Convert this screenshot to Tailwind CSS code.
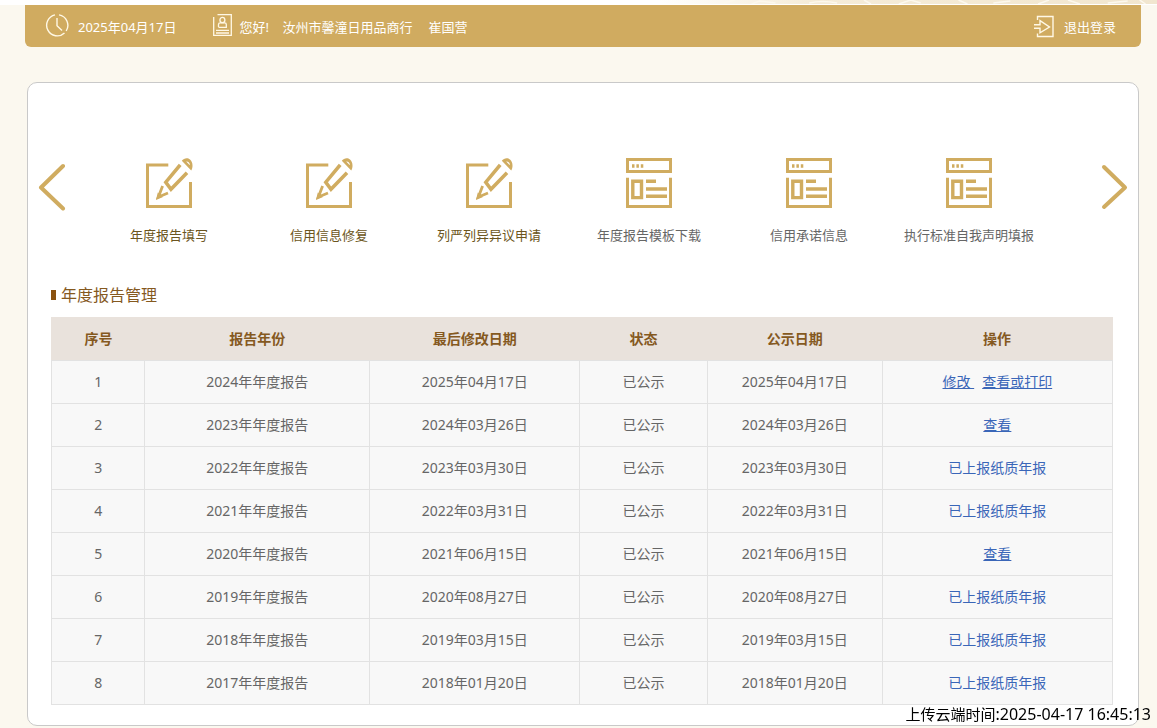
<!DOCTYPE html>
<html lang="zh-CN">
<head>
<meta charset="utf-8">
<meta name="viewport" content="width=device-width, initial-scale=1">
<title>年度报告管理</title>
<script src="https://cdn.jsdelivr.net/npm/@tailwindcss/browser@4"></script>
</head>
<body class="min-h-screen bg-[#fbf8ef] font-['Noto_Sans','Noto_Sans_CJK_SC',sans-serif] text-sm text-[#666666]">
<svg class="hidden" aria-hidden="true">
  <symbol id="edit" viewBox="0 0 48 52">
    <g fill="none" stroke="#d0ac60" stroke-width="3">
      <path d="M23.3 8H2.5V49.5H45.5V25"/>
      <path d="M35.2 7.8 20.8 25.2 26 32.2 42 15.8" stroke-width="3.6"/>
      <path d="M17.6 29 13.4 40 23 36" stroke-width="2.8"/>
    </g>
    <path fill="#d0ac60" d="M11 43 12.8 35.5 18 40ZM36.8 3.8C38.8 1.2 42.6.4 45 2.6 48 5.3 48.2 10.2 46.2 13.4ZM41.2 4.4 44.8 8.2C45 5.8 43.4 4.2 41.2 4.4Z" fill-rule="evenodd"/>
  </symbol>
  <symbol id="page" viewBox="0 0 48 52">
    <g fill="none" stroke="#d0ac60" stroke-width="3">
      <path d="M2.5 2.5H45.5V14.5H2.5ZM2.5 20.7V49.5H45.5V20.7"/>
      <path d="M7.8 24.2H16.5V40.6H7.8Z" stroke-width="3.4"/>
      <path d="M21 24.2H31M21 32H42M21 39.2H42" stroke-width="3.4"/>
      <path d="M7 9H9.5M11.4 9H13.9M15.8 9H18.3" stroke-width="3.4"/>
    </g>
  </symbol>
</svg>

<div class="flex h-[5px] bg-white" aria-hidden="true">
  <svg class="ml-auto h-1 w-[43%]" viewBox="0 0 500 4" preserveAspectRatio="none">
    <defs><linearGradient id="silk"><stop offset="0" stop-color="#fff"/><stop offset=".3" stop-color="#f5ecd9"/><stop offset="1" stop-color="#f1e6cf"/></linearGradient></defs>
    <path fill="url(#silk)" d="M0 0H500V4H0Z"/>
    <path fill="none" stroke="#fcf8ee" stroke-width="1.5" d="M60 4 75 0M92 4 100 1 116 3M150 3Q163 0 178 3M205 0 212 4M240 4 252 0 262 3M300 0 309 4M335 3 352 1M380 4 391 0M410 0 422 4M450 3 470 1M482 0 488 4"/>
  </svg>
</div>

<header class="mr-4 ml-[25px] flex h-[42px] items-center rounded-b-md bg-[#d0ab60] pr-[25px] pl-5 text-[13px] text-white">
  <svg class="mb-0.5 size-6 shrink-0" viewBox="0 0 24 24" fill="none" stroke="#fff8e5" stroke-width="1.4" aria-hidden="true">
    <path d="M10 1.9A10.6 10.6 0 1 0 19.5 20M14 1.9A10.6 10.6 0 0 1 21.2 18M12 5V12.8L17 17.5"/>
  </svg>
  <time class="ml-[9px] pt-0.5">2025年04月17日</time>
  <svg class="mb-0.5 ml-[35px] h-6 w-5 shrink-0" viewBox="0 0 20 24" fill="none" stroke="#fff8e5" stroke-width="1.3" aria-hidden="true">
    <path d="M1.7 4V22.3H19.3V1.7H5.5M4 17.3H17M4 20H17M6.5 14V11.5Q6.5 9.8 8.3 9.8H12.7Q14.3 9.8 14.3 11.5V14.3H6.5"/>
    <ellipse cx="10.4" cy="7" rx="2.5" ry="2.7"/>
  </svg>
  <p class="ml-2 flex pt-0.5 whitespace-nowrap"><span class="w-[43px]">您好!</span><span>汝州市馨潼日用品商行</span><span class="ml-4">崔国营</span></p>
  <a href="#logout" class="ml-auto flex items-center gap-2.5">
    <svg class="h-6 w-5" viewBox="0 0 20 24" fill="none" stroke="#fff8e5" stroke-width="1.4" aria-hidden="true">
      <path d="M3.5 6V2.5H19V22.5H3.5V19.5M0 10.8H6V6.6L15.5 13 6 18.8V14.3H0"/>
    </svg>
    <span class="pt-0.5">退出登录</span>
  </a>
</header>

<main class="mt-[35px] mr-[18px] mb-0.5 ml-[27px] rounded-[10px] border border-[#c9c9c9] bg-white pb-5">
  <nav class="flex items-start pt-[74px] pr-2.5 pl-2.5" aria-label="业务导航">
    <button type="button" aria-label="上一组" class="mt-1.5 shrink-0">
      <svg class="h-12 w-7" viewBox="0 0 28 48" fill="none" stroke="#d0ac60" stroke-width="4" stroke-linecap="round" stroke-linejoin="round"><path d="M25 3 3 24.5 25 45.5"/></svg>
    </button>
    <ul class="mr-[51px] ml-[23px] grid flex-1 grid-cols-6 text-center text-[13px] whitespace-nowrap">
      <li><a href="#report" class="flex flex-col items-center gap-[17px] text-[#6b5520]"><svg class="h-[52px] w-12"><use href="#edit"/></svg>年度报告填写</a></li>
      <li><a href="#repair" class="flex flex-col items-center gap-[17px] text-[#6b5520]"><svg class="h-[52px] w-12"><use href="#edit"/></svg>信用信息修复</a></li>
      <li><a href="#objection" class="flex flex-col items-center gap-[17px] text-[#6b5520]"><svg class="h-[52px] w-12"><use href="#edit"/></svg>列严列异异议申请</a></li>
      <li><a href="#templates" class="flex flex-col items-center gap-[17px]"><svg class="h-[52px] w-12"><use href="#page"/></svg>年度报告模板下载</a></li>
      <li><a href="#promise" class="flex flex-col items-center gap-[17px]"><svg class="h-[52px] w-12"><use href="#page"/></svg>信用承诺信息</a></li>
      <li><a href="#standards" class="flex flex-col items-center gap-[17px]"><svg class="h-[52px] w-12"><use href="#page"/></svg>执行标准自我声明填报</a></li>
    </ul>
    <button type="button" aria-label="下一组" class="mt-1.5 shrink-0">
      <svg class="h-12 w-7" viewBox="0 0 28 48" fill="none" stroke="#d0ac60" stroke-width="4" stroke-linecap="round" stroke-linejoin="round"><path d="M4 4 25 24.5 4 44"/></svg>
    </button>
  </nav>

  <section class="mt-[38px] mr-[25px] ml-[23px]">
    <h2 class="flex h-6 items-center gap-[5px] text-base text-[#85591f]"><span class="h-2.5 w-[5px] bg-[#8a5210]"></span>年度报告管理</h2>
    <table class="mt-2.5 w-full table-fixed border-collapse text-center">
      <colgroup><col class="w-[8.8%]"><col class="w-[21.2%]"><col class="w-[19.8%]"><col class="w-[12%]"><col class="w-[16.5%]"><col></colgroup>
      <thead>
        <tr class="h-[43px] border border-[#e9e2dc] bg-[#e9e2dc] text-[#85591f]">
          <th scope="col">序号</th><th scope="col">报告年份</th><th scope="col">最后修改日期</th><th scope="col">状态</th><th scope="col">公示日期</th><th scope="col">操作</th>
        </tr>
      </thead>
      <tbody class="bg-[#f8f8f8] [&_a]:text-[#3a66b8] [&_td]:border [&_td]:border-[#e2e2e2] [&_tr]:h-[43px]">
        <tr><td>1</td><td>2024年年度报告</td><td>2025年04月17日</td><td>已公示</td><td>2025年04月17日</td><td><a href="#edit-1" class="mr-2 whitespace-pre underline">修改 </a><a href="#view-1" class="underline">查看或打印</a></td></tr>
        <tr><td>2</td><td>2023年年度报告</td><td>2024年03月26日</td><td>已公示</td><td>2024年03月26日</td><td><a href="#view-2" class="underline">查看</a></td></tr>
        <tr><td>3</td><td>2022年年度报告</td><td>2023年03月30日</td><td>已公示</td><td>2023年03月30日</td><td><a href="#view-3">已上报纸质年报</a></td></tr>
        <tr><td>4</td><td>2021年年度报告</td><td>2022年03月31日</td><td>已公示</td><td>2022年03月31日</td><td><a href="#view-4">已上报纸质年报</a></td></tr>
        <tr><td>5</td><td>2020年年度报告</td><td>2021年06月15日</td><td>已公示</td><td>2021年06月15日</td><td><a href="#view-5" class="underline">查看</a></td></tr>
        <tr><td>6</td><td>2019年年度报告</td><td>2020年08月27日</td><td>已公示</td><td>2020年08月27日</td><td><a href="#view-6">已上报纸质年报</a></td></tr>
        <tr><td>7</td><td>2018年年度报告</td><td>2019年03月15日</td><td>已公示</td><td>2019年03月15日</td><td><a href="#view-7">已上报纸质年报</a></td></tr>
        <tr><td>8</td><td>2017年年度报告</td><td>2018年01月20日</td><td>已公示</td><td>2018年01月20日</td><td><a href="#view-8">已上报纸质年报</a></td></tr>
      </tbody>
    </table>
  </section>
</main>

<p class="fixed right-1.5 bottom-0.5 text-[15px] leading-6 whitespace-nowrap text-black">上传云端时间<time class="text-base leading-6">:2025-04-17 16:45:13</time></p>
</body>
</html>
